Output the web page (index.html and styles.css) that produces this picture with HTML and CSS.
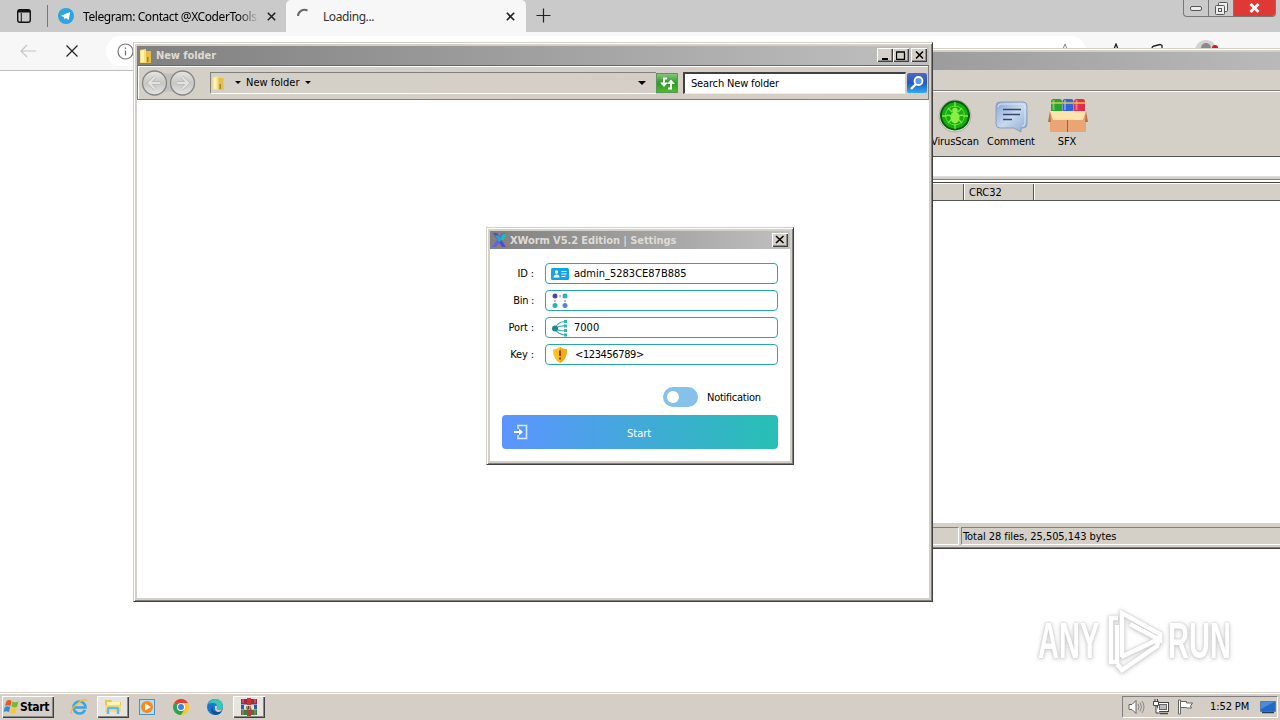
FILE: index.html
```
<!DOCTYPE html>
<html lang="en">
<head>
    <meta charset="UTF-8">
    <meta name="viewport" content="width=device-width, initial-scale=1.0">
    <title>Desktop</title>
    <link rel="stylesheet" href="styles.css">
</head>

<body>
<div class="desktop">

    <!-- browser -->
    <div class="browser">
        <div class="tab-strip">
            <svg class="tab-actions" width="16" height="16" viewBox="0 0 16 16">
                <rect x="1.700" y="1.700" width="12.600" height="12.600" rx="2.200" fill="none" stroke="#111" stroke-width="1.400"/>
                <path d="M2 3.200h12" stroke="#111" stroke-width="2.600"/>
                <path d="M5.300 5v9" stroke="#111" stroke-width="1"/>
            </svg>
            <div class="tab">
                <svg width="16" height="16" viewBox="0 0 16 16">
                    <circle cx="8" cy="8" r="8" fill="#2ca5e0"/>
                    <path d="M3 7.8l9.2-3.7-1.5 8-2.8-2-1.5 1.4-.5-2.5z" fill="#fff"/>
                </svg>
                <span class="tab-title fade">Telegram: Contact @XCoderTools</span>
                <svg class="tab-close" width="9" height="9" viewBox="0 0 9 9">
                    <path d="M.8.8l7.4 7.4M8.2.8L.8 8.2" stroke="#222" stroke-width="1.6"/>
                </svg>
            </div>
            <div class="tab active">
                <svg width="16" height="16" viewBox="0 0 16 16">
                    <path d="M2 8a6.500 6.500 0 0 1 9.500-5.500" fill="none" stroke="#666" stroke-width="2"/>
                </svg>
                <span class="tab-title">Loading...</span>
                <svg class="tab-close" width="9" height="9" viewBox="0 0 9 9">
                    <path d="M.8.8l7.4 7.4M8.2.8L.8 8.2" stroke="#222" stroke-width="1.6"/>
                </svg>
            </div>
            <svg class="new-tab" width="15" height="15" viewBox="0 0 15 15">
                <path d="M7.500 .5v14M.5 7.500h14" stroke="#222" stroke-width="1.2"/>
            </svg>
            <div class="caption-buttons">
                <span class="caption">
                    <svg width="12" height="5" viewBox="0 0 12 5"><rect x=".5" y=".5" width="11" height="4" rx="1.500" fill="#eee" stroke="#555"/></svg>
                </span>
                <span class="caption">
                    <svg width="13" height="13" viewBox="0 0 13 13" fill="#eee" stroke="#555">
                        <rect x="3.500" y=".5" width="9" height="9" rx="1"/>
                        <rect x=".5" y="3.500" width="9" height="9" rx="1"/>
                        <rect x="3.500" y="6.500" width="3" height="3"/>
                    </svg>
                </span>
                <span class="caption caption-close">
                    <svg width="11" height="10" viewBox="0 0 11 10"><path d="M1.500 1l8 8M9.500 1l-8 8" stroke="#fff" stroke-width="2.800"/></svg>
                </span>
            </div>
        </div>
        <div class="address-bar">
            <svg class="nav-back" width="16" height="14" viewBox="0 0 16 14">
                <path d="M7 1L1 7l6 6M1 7h15" fill="none" stroke="#c4c4c4" stroke-width="1.2"/>
            </svg>
            <svg class="nav-stop" width="12" height="12" viewBox="0 0 12 12">
                <path d="M.5.5l11 11M11.500.5l-11 11" stroke="#222" stroke-width="1.2"/>
            </svg>
            <div class="address">
                <svg width="17" height="17" viewBox="0 0 17 17">
                    <circle cx="8.500" cy="8.500" r="7.500" fill="none" stroke="#777" stroke-width="1.2"/>
                    <path d="M8.500 7.500v5M8.500 4.500v1.500" stroke="#777" stroke-width="1.3"/>
                </svg>
                <svg class="star" width="16" height="16" viewBox="0 0 16 16">
                    <path d="M8 1l2 5h5l-4 3.500 1.500 5L8 12l-4.500 2.500L5 9.500 1 6h5z" fill="none" stroke="#888"/>
                </svg>
            </div>
            <svg class="favorites" width="16" height="16" viewBox="0 0 16 16">
                <path d="M8 1l2 5h5l-4 3.500 1.500 5L8 12l-4.500 2.500L5 9.500 1 6h5z" fill="none" stroke="#222" stroke-width="1.3"/>
            </svg>
            <svg class="collections" width="16" height="16" viewBox="0 0 16 16">
                <path d="M3 13V5q0-1.500 2-2l6-1.500 2 1V5" fill="none" stroke="#222" stroke-width="1.3"/>
            </svg>
            <svg class="profile" width="24" height="24" viewBox="0 0 24 24">
                <circle cx="11" cy="11" r="11" fill="#d2d2d2"/>
                <circle cx="11" cy="8" r="5" fill="#8a8a8a"/>
                <circle cx="20" cy="8" r="3" fill="#e01020"/>
            </svg>
        </div>
    </div>

    <!-- archive manager -->
    <div class="window archive">
        <div class="archive-title"></div>
        <div class="archive-menu"></div>
        <div class="archive-tools">
            <div class="tool tool-scan">
                <svg width="34" height="34" viewBox="0 0 34 34">
                    <circle cx="17" cy="17" r="16" fill="#e8e8e4" stroke="#aaa"/>
                    <circle cx="17" cy="16.500" r="14" fill="#18ac12" stroke="#056008" stroke-width="2"/>
                    <circle cx="17" cy="16.500" r="9.500" fill="none" stroke="#5fe238"/>
                    <path d="M17 3v5M17 25v5M4 17h5M25 17h5M10 9l4 4M24 9l-4 4M9 16l5 1M25 16l-5 1M10 24l4-4M24 24l-4-4" stroke="#7aed42" stroke-width="1.300"/>
                    <ellipse cx="17" cy="18.500" rx="4.500" ry="6" fill="#8aee44"/>
                    <circle cx="17" cy="11.500" r="2.800" fill="#8aee44"/>
                </svg>
                <span>VirusScan</span>
            </div>
            <div class="tool tool-comment">
                <svg width="34" height="34" viewBox="0 0 34 34">
                    <defs>
                        <linearGradient id="bubble" x1="0" y1="0" x2="1" y2="1">
                            <stop offset="0" stop-color="#86a5d2"/>
                            <stop offset=".5" stop-color="#c9d9ee"/>
                            <stop offset="1" stop-color="#8aa7d0"/>
                        </linearGradient>
                    </defs>
                    <path d="M6 3h23q4 0 4 4v18q0 4-4 4h-2v4l-7-4H6q-4 0-4-4V7q0-4 4-4z" fill="url(#bubble)" stroke="#8b9fbe"/>
                    <path d="M4 8q0-3 3-3h21q3 0 3 3v16q0 3-3 3" fill="none" stroke="#dde8f7"/>
                    <path d="M9 10.500h18M9 15.500h17M9 20.500h9" stroke="#34476c" stroke-width="1.600"/>
                </svg>
                <span>Comment</span>
            </div>
            <div class="tool tool-sfx">
                <svg width="40" height="34" viewBox="0 0 40 34">
                    <rect x="3" y="0" width="11" height="15" rx="2.500" fill="#29a52e"/>
                    <rect x="14.500" y="0" width="11" height="15" rx="2.500" fill="#3265d8"/>
                    <rect x="26" y="0" width="11" height="15" rx="2.500" fill="#e22d52"/>
                    <path d="M5.500 1v10M17 1v10M28.500 1v10" stroke="#fff" stroke-opacity=".35" stroke-width="2"/>
                    <path d="M3 4h11M14.500 4h11M26 4h11" stroke="#e9c83c" stroke-width="1.500"/>
                    <path d="M2 12h36v21H2z" fill="#eba575"/>
                    <path d="M2 12l-2 11h3zM38 12l2 11h-3z" fill="#b9713e"/>
                    <path d="M2 12h36l-3 9H5z" fill="#ffe2ac"/>
                    <path d="M19.500 21v12" stroke="#9c6238"/>
                </svg>
                <span>SFX</span>
            </div>
        </div>
        <div class="archive-path"></div>
        <div class="archive-columns">
            <span class="column blank"></span>
            <span class="column crc">CRC32</span>
            <span class="column rest"></span>
        </div>
        <div class="archive-list"></div>
        <div class="archive-status">
            <span class="status-cell"></span>
            <span class="status-cell total">Total 28 files, 25,505,143 bytes</span>
        </div>
    </div>

    <!-- folder window -->
    <div class="window folder">
        <div class="title-bar">
            <svg width="14" height="16" viewBox="0 0 14 16">
                <path d="M1 2l6-1v14H1z" fill="#f7e07a"/><path d="M7 3h5v12H7z" fill="#e6c046"/>
                <path d="M2 3l3-1v12H2z" fill="#fff2b5"/><path d="M8 9h1.500v5H8z" fill="#a08432"/>
            </svg>
            <span class="title">New folder</span>
            <span class="win-button"><svg width="10" height="9"><path d="M2 8h6" stroke="#000" stroke-width="2"/></svg></span>
            <span class="win-button"><svg width="10" height="9"><path d="M.5 1.500v7h8v-7M0 1h9" fill="none" stroke="#000" stroke-width="1.300"/></svg></span>
            <span class="win-button win-close"><svg width="9" height="8"><path d="M1 .5l7 7M8 .5l-7 7" stroke="#000" stroke-width="1.500"/></svg></span>
        </div>
        <div class="folder-bar">
            <svg class="nav-circles" width="56" height="28" viewBox="0 0 56 28">
                <defs>
                    <linearGradient id="nav" x1="0" y1="0" x2="0" y2="1">
                        <stop offset="0" stop-color="#e6e6e4"/><stop offset=".5" stop-color="#c7c7c4"/><stop offset="1" stop-color="#e4e4e2"/>
                    </linearGradient>
                </defs>
                <path d="M13 2q15 5 30 0v23q-15-5-30 0z" fill="#c3c1bc"/>
                <g fill="url(#nav)" stroke="#858587" stroke-width="1.300"><circle cx="13.500" cy="14" r="12"/><circle cx="41.500" cy="14" r="12"/></g>
                <path d="M14 8l-6 6 6 6M8 14h11M41 8l6 6-6 6M47 14H36" fill="none" stroke="#b8b8b6" stroke-width="3.600"/>
                <path d="M14 8l-6 6 6 6M8 14h11M41 8l6 6-6 6M47 14H36" fill="none" stroke="#e2e2e0" stroke-width="2.200"/>
            </svg>
            <div class="breadcrumb">
                <svg width="15" height="16" viewBox="0 0 14 16">
                    <path d="M1 2l6-1v14H1z" fill="#f7e07a"/><path d="M7 3h5v12H7z" fill="#e6c046"/>
                    <path d="M2 3l3-1v12H2z" fill="#fff2b5"/><path d="M8 9h1.500v5H8z" fill="#a08432"/>
                </svg>
                <i class="arrow"></i>
                <span>New folder</span>
                <i class="arrow"></i>
                <i class="arrow big"></i>
            </div>
            <span class="refresh">
                <svg width="18" height="16" viewBox="0 0 18 16">
                    <path d="M9 3.500H6V9" fill="none" stroke="#fff" stroke-width="2"/><path d="M2 7.500h8L6 12z" fill="#fff"/>
                    <path d="M10 13.500h3V8" fill="none" stroke="#fff" stroke-width="2"/><path d="M9 9h8l-4-4.500z" fill="#fff"/>
                </svg>
            </span>
            <div class="search">Search New folder</div>
            <span class="search-button">
                <svg width="16" height="16" viewBox="0 0 16 16"><circle cx="9.500" cy="6" r="4" fill="#5c9be4" stroke="#fff" stroke-width="1.800"/><path d="M7 9l-5 5" stroke="#fff" stroke-width="2.400"/></svg>
            </span>
        </div>
        <div class="folder-body"></div>
    </div>

    <!-- settings dialog -->
    <div class="window settings">
        <div class="title-bar">
            <svg width="15" height="15" viewBox="0 0 15 15">
                <path d="M1 0h4l9 14h-4z" fill="#5948c8"/><path d="M10 0h4L4 14H0z" fill="#5b63e8"/>
                <path d="M7.500 7L11 1h3l-2 6z" fill="#22bdb2"/><path d="M3 2l4 1 3 4-3 2z" fill="#25a7c4"/>
            </svg>
            <span class="title">XWorm V5.2 Edition | Settings</span>
            <span class="win-button win-close"><svg width="10" height="9"><path d="M1 1l7.500 7M8.500 1L1 8" stroke="#000" stroke-width="1.500"/></svg></span>
        </div>
        <div class="settings-body">
            <div class="field">
                <span class="label">ID :</span>
                <div class="input">
                    <svg width="18" height="18" viewBox="0 0 18 18">
                        <rect x="0" y="3" width="18" height="12" rx="1.500" fill="#13a3ea"/>
                        <circle cx="5.500" cy="7" r="1.700" fill="#fff"/><path d="M2.500 12.500q0-3 3-3t3 3z" fill="#fff"/>
                        <path d="M10.500 6.500h5M10.500 9h5M10.500 11.500h4" stroke="#fff"/>
                    </svg>
                    <span>admin_5283CE87B885</span>
                </div>
            </div>
            <div class="field">
                <span class="label bin-label">Bin :</span>
                <div class="input">
                    <svg width="18" height="18" viewBox="0 0 18 18">
                        <path d="M4 4h10M4 4v10M14 4v10" fill="none" stroke="#6976ba" stroke-dasharray="2 2"/>
                        <circle cx="4" cy="4" r="2.500" fill="#5145a5"/><circle cx="14" cy="4" r="2.500" fill="#27b2b4"/>
                        <circle cx="4" cy="13.500" r="2.500" fill="#27b2b4"/><circle cx="14" cy="13.500" r="2.500" fill="#607ddd"/>
                    </svg>
                </div>
            </div>
            <div class="field">
                <span class="label">Port :</span>
                <div class="input">
                    <svg width="18" height="18" viewBox="0 0 18 18">
                        <path d="M4 9.500Q7 2.500 14 2.500M4 9.500q4-3 10-2.500M4 9.500q4 3 10 2M4 9.500q3 6 10 6.500" fill="none" stroke="#4aa9b3" stroke-width="1.200"/>
                        <circle cx="4" cy="9.500" r="3" fill="#188c94"/>
                        <path d="M13 1h3v3h-3zM13 5.500h3v3h-3zM13 10h3v3h-3zM13 14.500h3v3h-3z" fill="#28b6c0"/>
                    </svg>
                    <span>7000</span>
                </div>
            </div>
            <div class="field">
                <span class="label">Key :</span>
                <div class="input key">
                    <svg width="18" height="18" viewBox="0 0 18 18">
                        <path d="M9 1q3 2 7 2.500 0 10-7 13.500Q2 13.500 2 3.500 6 3 9 1z" fill="#ffc21b"/>
                        <path d="M9 1q3 2 7 2.500 0 10-7 13.500z" fill="#efac13"/>
                        <path d="M9 4.500v5.500M9 11.500v2" stroke="#8b3c16" stroke-width="2"/>
                    </svg>
                    <span>&lt;123456789&gt;</span>
                </div>
            </div>
            <div class="notify">
                <span class="toggle"><i class="knob"></i></span>
                <span class="notify-text">Notification</span>
            </div>
            <div class="start-action">
                <svg width="14" height="16" viewBox="0 0 14 16">
                    <path d="M4 5V1.500h8.500v13H4V11" fill="none" stroke="#d5e9ff" stroke-width="1.600"/>
                    <path d="M0 8h6" stroke="#fff" stroke-width="2"/><path d="M5 4.500L9 8l-4 3.500z" fill="#fff"/>
                </svg>
                <span>Start</span>
            </div>
        </div>
    </div>

    <!-- ANY.RUN mark -->
    <div class="watermark">
        <span class="mark-word">ANY</span>
        <svg width="56" height="64" viewBox="0 0 56 64">
            <g fill="none" stroke="#fff" stroke-width="4.500">
                <path d="M11 9H4v44h6V16"/>
                <path d="M15 48V4l38 21v6L23 15"/>
                <path d="M14 48l38-18-2 7-35 24-5-6"/>
            </g>
        </svg>
        <span class="mark-word">RUN</span>
    </div>

    <!-- taskbar -->
    <div class="taskbar">
        <div class="start-button">
            <svg width="17" height="16" viewBox="0 0 16 16">
                <path d="M3 2q3-2 5 0L7 7Q4 5.500 1.500 7z" fill="#eb5522"/><path d="M9 2.500q3 1.500 6 0L13.500 8Q11 9 8 7.500z" fill="#74bb35"/>
                <path d="M1.300 8Q4 6.500 6.800 8l-1.300 5Q3 11.500 0 13z" fill="#338ed8"/><path d="M7.800 8.500q3 1.500 5.500.5L12 14q-3 1-5.500-.5z" fill="#fac833"/>
            </svg>
            <span>Start</span>
        </div>
        <span class="task ie">
            <svg width="18" height="18" viewBox="0 0 18 18">
                <path d="M15 12q-1.500 3.500-5.500 3.500a6 6 0 1 1 6-6H4.500" fill="none" stroke="#3ca4df" stroke-width="2.600"/>
                <path d="M2 16Q-1 13 7 6t10-3" fill="none" stroke="#f0bd39" stroke-width="1.500"/>
            </svg>
        </span>
        <span class="task open">
            <svg width="18" height="17" viewBox="0 0 18 17">
                <path d="M1 2h6l1 2h9v10H1z" fill="#e8c456"/><path d="M3 4h13v8H3z" fill="#fff5b4"/>
                <path d="M1 7h16v7H1z" fill="#f3dc7e"/><path d="M4 16v-5q0-1 1-1h8q1 0 1 1v5" fill="none" stroke="#65b8df" stroke-width="2.500"/>
            </svg>
        </span>
        <span class="task">
            <svg width="16" height="16" viewBox="0 0 16 16">
                <rect x=".5" y=".5" width="15" height="15" fill="#b9dcf0" stroke="#4795c4"/>
                <circle cx="8" cy="8" r="6" fill="#f58a1d"/><path d="M6 4.500v7L12 8z" fill="#fff"/>
            </svg>
        </span>
        <span class="task">
            <svg width="16" height="16" viewBox="0 0 16 16">
                <circle cx="8" cy="8" r="8" fill="#fcc724"/>
                <path d="M8 8L1.100 4A8 8 0 0 1 15 4H8z" fill="#e53d31"/>
                <path d="M8 8L1.100 4a8 8 0 0 0 6.900 12l3-5z" fill="#2da250"/>
                <circle cx="8" cy="8" r="4" fill="#fff"/><circle cx="8" cy="8" r="3" fill="#3e80e6"/>
            </svg>
        </span>
        <span class="task">
            <svg width="16" height="16" viewBox="0 0 16 16">
                <circle cx="8" cy="8" r="8" fill="#1578cb"/>
                <path d="M1 5Q4 0 9 0q7 1 7 7 0 4-5 4-2-1-1-3 0-4-4-4-3 0-5 1z" fill="#38c5ba"/>
                <path d="M6 7q-2 6 6 6 2 0 3-1-3 5-8 3.500Q2 12 6 7z" fill="#124e98"/>
                <path d="M8 7q2-1 2 1-1 2 1 3 3 0 4-1-1 3-4 3-4-1-3-6z" fill="#d4d0c8"/>
            </svg>
        </span>
        <span class="task open rar">
            <svg width="18" height="18" viewBox="0 0 18 18">
                <path d="M1 1h16v5H1z" fill="#a52940"/><path d="M1 6.500h16v5H1z" fill="#3458a9"/><path d="M1 12h16v5H1z" fill="#318141"/>
                <path d="M7 0h4v18H7z" fill="#c33832"/><path d="M4 7h10v4.500H4z" fill="#eee1bc"/><path d="M7 8v3h1.500V8M10 8v3h1.500" fill="none" stroke="#54412c"/>
                <path d="M3 1v4M15 1v4M3 12v5M15 12v5" stroke="#dd7575"/>
            </svg>
        </span>
        <div class="tray">
            <svg width="17" height="16" viewBox="0 0 17 16">
                <path d="M1 5.500h3l4-4v13l-4-4H1z" fill="#fff" stroke="#666"/><path d="M10 5q2 3 0 6M12 3.500q3 4.500 0 9M14 2q4 6 0 12" fill="none" stroke="#888"/>
            </svg>
            <svg class="network" width="17" height="16" viewBox="0 0 17 16">
                <rect x="4.500" y="3.500" width="11" height="9" fill="#fff" stroke="#444"/><rect x="6.500" y="5.500" width="7" height="5" fill="#bbb" stroke="#666"/>
                <path d="M7 14.500h8" stroke="#444" stroke-width="1.500"/>
                <path d="M.5 2.500h5v4h-5zM3 6.500V14h4" fill="#fff" stroke="#444"/><path d="M2 0v2M4.500 0v2" stroke="#444"/>
            </svg>
            <svg class="flag" width="17" height="16" viewBox="0 0 17 16">
                <path d="M1.500 1v14h2V1z" fill="#fff" stroke="#666"/><path d="M3.500 2.500h6v1.500h6l-2 3 1 2h-5V8.500h-6z" fill="#fff" stroke="#666"/>
            </svg>
            <span class="clock">1:52 PM</span>
            <svg class="show-desktop" width="16" height="14" viewBox="0 0 16 14">
                <path d="M.5 1.500h15v10H.5z" fill="#2569c5" stroke="#5c7ca8"/><path d="M1 2h13L1 9z" fill="#4a8bdc"/><path d="M2 12.500h12" stroke="#203c60" stroke-width="1.500"/>
            </svg>
        </div>
    </div>
</div>
</body>

</html>
```
FILE: styles.css
```
* {
    box-sizing: border-box;
}

body {
    margin: 0;
    font-family: "DejaVu Sans Condensed", "DejaVu Sans", sans-serif;
    font-size: 11px;
    color: #000;
}

svg {
    display: block;
    flex: none;
}

span {
    white-space: nowrap;
}

.desktop {
    position: relative;
    width: 1280px;
    height: 720px;
    overflow: hidden;
    background: #fff;
}

/* browser */
.tab-strip {
    display: flex;
    height: 32px;
    background: #cacaca;
    font-family: "Noto Sans", sans-serif;
    font-size: 12px;
    letter-spacing: -.42px;
}

.tab-actions {
    margin: 8px 15px 0 16px;
}

.tab {
    display: flex;
    align-items: center;
    width: 239px;
    padding: 0 10px;
    border-left: 1px solid #777;
    height: 22px;
    margin-top: 5px;
}

.tab-title {
    flex: 1;
    overflow: hidden;
    margin-left: 9px;
}

.fade {
    -webkit-mask-image: linear-gradient(90deg, #000 88%, transparent);
    mask-image: linear-gradient(90deg, #000 88%, transparent);
}

.tab .tab-close {
    margin-left: 8px;
}

.tab.active {
    width: 240px;
    height: 32px;
    margin-top: 0;
    padding-right: 11px;
    border: 0;
    border-radius: 5px 5px 0 0;
    background: #f7f7f7;
}

.tab.active .tab-title {
    margin-left: 11px;
    color: #333;
}

.new-tab {
    margin: 8px 0 0 10px;
}

.caption-buttons {
    display: flex;
    height: 17px;
    margin: 0 4px 0 auto;
    border: 1px solid #777;
    border-top: 0;
    border-radius: 0 0 4px 4px;
    overflow: hidden;
}

.caption {
    display: flex;
    align-items: center;
    justify-content: center;
    width: 25px;
    border-right: 1px solid #777;
}

.caption-close {
    width: 41px;
    border: 0;
    background: #df3936;
}

.address-bar {
    display: flex;
    align-items: center;
    height: 39px;
    padding-left: 20px;
    background: #f7f7f7;
    border-bottom: 1px solid #bdbdbd;
}

.nav-stop {
    margin: 0 28px 0 30px;
}

.address {
    display: flex;
    align-items: center;
    width: 980px;
    height: 30px;
    padding: 0 13px 0 11px;
    border-radius: 15px;
    background: #fff;
}

.star {
    margin: 0 0 0 auto;
}

.favorites {
    margin: 0 0 0 22px;
}

.collections {
    margin: 0 0 0 25px;
}

.profile {
    margin: 2px 0 0 30px;
}

/* classic windows */
.window {
    position: absolute;
    display: flex;
    flex-direction: column;
    background: #d4d0c8;
    border: 1px solid #d4d0c8;
    border-right-color: #404040;
    border-bottom-color: #404040;
    box-shadow: inset 1px 1px #fff, inset -1px -1px #808080;
}

.title-bar {
    display: flex;
    align-items: center;
    height: 19px;
    padding: 0 2px;
    background: linear-gradient(90deg, #808080, #c0c0c0);
}

.title {
    margin: 0 auto 0 3px;
    font-weight: bold;
    letter-spacing: -.08px;
    color: #dedbd5;
}

.win-button {
    display: flex;
    align-items: center;
    justify-content: center;
    width: 16px;
    height: 14px;
    margin-top: -1px;
    background: #d4d0c8;
    box-shadow: inset 1px 1px #fff, inset -1px -1px #404040, inset -2px -2px #909090;
}

.win-close {
    margin-left: 2px;
}

/* archive manager */
.archive {
    left: 600px;
    top: 48px;
    width: 700px;
    height: 501px;
    padding: 3px 2px 2px;
}

.archive-title {
    height: 18px;
    background: linear-gradient(90deg, #808080, #bbb);
}

.archive-menu {
    height: 21px;
    border-bottom: 1px solid #808080;
}

.archive-tools {
    display: flex;
    height: 66px;
    padding: 7px 0 0 324px;
    border-top: 1px solid #fff;
    border-bottom: 1px solid #555;
    letter-spacing: -.1px;
}

.tool {
    display: flex;
    flex-direction: column;
    align-items: center;
    gap: 2px;
    width: 56px;
}

.tool-sfx svg {
    margin-left: 1px;
}

.archive-path {
    height: 20px;
    background: #fff;
    border-bottom: 1px solid #ddd;
}

.archive-columns {
    display: flex;
    height: 24px;
    padding-top: 7px;
    border-bottom: 1px solid #555;
    background: linear-gradient(#d4d0c8 2px, #808080 2px 3px, #fff 3px 5px, #444 5px 6px, #fff 6px 7px, #d4d0c8 7px);
}

.column {
    height: 16px;
    border-right: 1px solid #555;
}

.blank {
    width: 361px;
}

.crc {
    width: 70px;
    padding: 2px 0 0 4px;
    border-left: 1px solid #fff;
}

.rest {
    flex: 1;
    border-left: 1px solid #fff;
}

.archive-list {
    flex: 1;
    background: #fff;
}

.archive-status {
    display: flex;
    gap: 2px;
    height: 23px;
    padding: 3px 0 1px;
    border-top: 1px solid #d4d0c8;
}

.status-cell {
    width: 356px;
    padding: 2px 1px;
    border: 1px solid #808080;
    border-right-color: #fff;
    border-bottom-color: #fff;
    letter-spacing: -.06px;
}

.total {
    flex: 1;
}

/* folder window */
.folder {
    left: 133px;
    top: 42px;
    width: 800px;
    height: 560px;
    padding: 3px;
}

.folder-bar {
    display: flex;
    align-items: center;
    height: 35px;
    padding: 0 1px 0 3px;
    border: 1px solid #808080;
    border-top-color: #666;
    box-shadow: inset 1px 1px #fff;
    background: linear-gradient(90deg, #d4d0c8, #d4cdc5);
}

.breadcrumb {
    display: flex;
    align-items: center;
    width: 446px;
    height: 22px;
    margin-left: 13px;
    border-top: 1px solid #808080;
    border-left: 1px solid #808080;
    border-bottom: 1px solid #fff;
}

.breadcrumb span {
    margin: 0 6px 0 5px;
}

.arrow {
    border: 3px solid transparent;
    border-top-color: #000;
    border-bottom: 0;
}

.breadcrumb svg + .arrow {
    margin-left: 9px;
}

.arrow.big {
    margin: 0 10px 0 auto;
    border-width: 4px 4px 0;
}

.refresh {
    display: flex;
    align-items: center;
    justify-content: center;
    width: 22px;
    height: 20px;
    border: 1px solid #5a9657;
    background: linear-gradient(#85c67e, #299a24 50%, #53b82d);
}

.search {
    width: 223px;
    height: 22px;
    margin: 0 1px 0 5px;
    padding: 3px 6px;
    border: 2px solid #404040;
    border-right: 1px solid #d4d0c8;
    border-bottom: 1px solid #eee;
    background: #fff;
    letter-spacing: -.16px;
}

.search-button {
    display: flex;
    align-items: center;
    justify-content: center;
    width: 20px;
    height: 20px;
    border-radius: 2px;
    background: linear-gradient(#4b68c9, #2458c3 50%, #31aceb);
}

.folder-body {
    flex: 1;
    background: #fff;
}

/* settings dialog */
.settings {
    left: 486px;
    top: 227px;
    width: 308px;
    height: 238px;
    padding: 3px;
}

.settings-body {
    flex: 1;
    padding: 14px 12px 12px;
    background: #fff;
}

.field {
    display: flex;
    align-items: center;
    height: 21px;
    margin-bottom: 6px;
}

.label {
    width: 32px;
    margin-right: 11px;
    text-align: right;
    letter-spacing: -.1px;
}

.bin-label {
    letter-spacing: -.3px;
}

.input {
    display: flex;
    align-items: center;
    gap: 5px;
    flex: 1;
    height: 21px;
    padding-left: 5px;
    border: 1px solid #25a9a9;
    border-radius: 4px;
}

.input span {
    padding-bottom: 1px;
}

.key {
    gap: 6px;
    letter-spacing: -.4px;
}

.notify {
    display: flex;
    align-items: center;
    gap: 9px;
    height: 20px;
    margin: 22px 0 8px 161px;
}

.notify-text {
    padding-top: 1px;
    letter-spacing: -.25px;
}

.toggle {
    display: flex;
    align-items: center;
    width: 35px;
    height: 20px;
    padding-left: 4px;
    border-radius: 10px;
    background: #85c1ea;
}

.knob {
    width: 12px;
    height: 12px;
    border-radius: 50%;
    background: #fff;
}

.start-action {
    display: flex;
    align-items: center;
    height: 34px;
    padding: 0 12px;
    border-radius: 4px;
    background: linear-gradient(90deg, #5c94ff, #27bfb3);
    color: #fff;
}

.start-action span {
    margin-left: 99px;
    padding-top: 2px;
}

/* ANY.RUN mark */
.watermark {
    position: absolute;
    left: 1038px;
    top: 609px;
    display: flex;
    align-items: center;
    gap: 5px;
    color: #fff;
    filter: drop-shadow(0 0 1px #ccc) drop-shadow(0 1px 2px #ccc);
}

.mark-word {
    width: 64px;
    font: bold 50px "Liberation Sans", sans-serif;
    transform: scaleX(.58);
    transform-origin: left;
}

/* taskbar */
.taskbar {
    position: absolute;
    left: 0;
    bottom: 0;
    display: flex;
    align-items: center;
    width: 1280px;
    height: 28px;
    padding: 1px 2px 1px;
    background: #d4cec6;
    border-top: 1px solid #d4d0c8;
    box-shadow: inset 0 1px #fff;
}

.start-button {
    display: flex;
    align-items: center;
    width: 52px;
    height: 22px;
    padding-left: 1px;
    font-size: 12px;
    font-weight: bold;
    letter-spacing: -.3px;
    box-shadow: inset 1px 1px #fff, inset -1px -1px #404040, inset -2px -2px #888;
}

.task {
    display: flex;
    align-items: center;
    justify-content: center;
    width: 32px;
    height: 22px;
    margin-right: 2px;
}

.ie {
    margin-left: 9px;
}

.open {
    background: #e7e4df;
    box-shadow: inset 1px 1px #fff, inset -1px -1px #404040, inset -2px -2px #888;
}

.tray {
    display: flex;
    align-items: center;
    width: 156px;
    height: 22px;
    margin-left: auto;
    padding-left: 5px;
    border: 1px solid #808080;
    border-right-color: #fff;
    border-bottom-color: #fff;
}

.network {
    margin-left: 8px;
}

.flag {
    margin-left: 7px;
}

.clock {
    margin-left: 16px;
    letter-spacing: -.1px;
}

.show-desktop {
    margin: 0 1px 0 auto;
}
```
